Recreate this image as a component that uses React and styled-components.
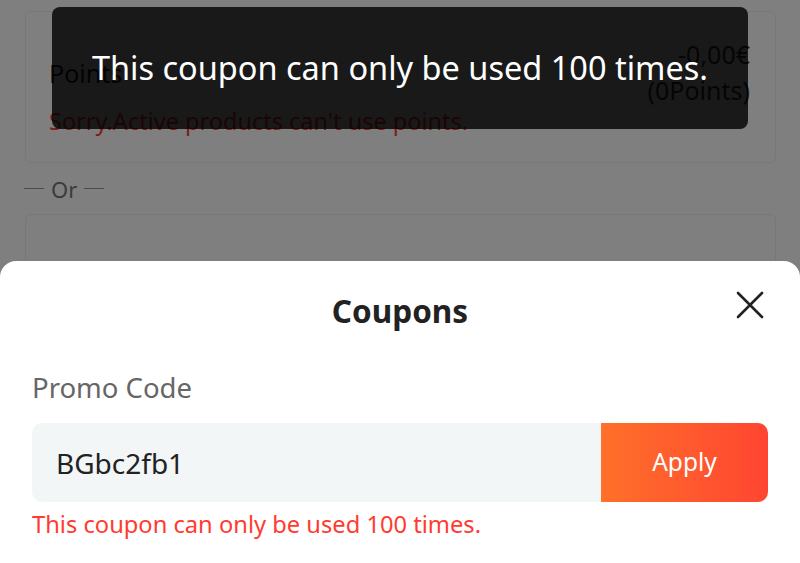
import React from "react";
import styled, { createGlobalStyle } from "styled-components";

const Global = createGlobalStyle`
  html, body { margin: 0; padding: 0; }
  body { font-family: "Noto Sans", "Open Sans", sans-serif; }
  * { box-sizing: border-box; }
`;

const Screen = styled.div`
  position: relative;
  width: 800px;
  height: 563px;
  overflow: hidden;
  background: #ffffff;
`;

const Page = styled.div`
  display: flex;
  flex-direction: column;
  padding: 11px 24px 0 25px;
`;

const Card = styled.div`
  border: 1px solid #f0f0f0;
  border-radius: 6px;
  background: #fefefe;
  padding: ${(p) => p.$pad || "24px 25px 26px 23px"};
  min-height: ${(p) => p.$minH || "auto"};
`;

const PointsRow = styled.div`
  display: flex;
  align-items: center;
  justify-content: space-between;
`;

const PointsLabel = styled.div`
  font-size: 25px;
  color: #222;
  margin-top: 2px;
`;

const Amounts = styled.div`
  display: flex;
  flex-direction: column;
  align-items: flex-end;
  font-size: 25px;
  line-height: 36px;
  color: #333;
`;

const PointsError = styled.div`
  font-size: 23.5px;
  line-height: 30px;
  color: #ff3b30;
  margin-top: -2px;
`;

const OrRow = styled.div`
  display: flex;
  align-items: center;
  height: 51px;
  gap: 7px;
  margin-left: -1px;
  font-size: 22px;
  color: #777;
`;

const OrLine = styled.span`
  width: 20px;
  height: 1px;
  background: #999;
`;

const Overlay = styled.div`
  position: absolute;
  inset: 0;
  background: rgba(0, 0, 0, 0.5);
`;

const Toast = styled.div`
  position: absolute;
  top: 7px;
  left: 52px;
  width: 696px;
  height: 122px;
  border-radius: 8px;
  background: rgba(0, 0, 0, 0.8);
  color: #fff;
  display: flex;
  align-items: center;
  justify-content: center;
  font-size: 32.5px;
  padding-bottom: 2px;
  z-index: 3;
`;

const Sheet = styled.div`
  position: absolute;
  left: 0;
  right: 0;
  bottom: 0;
  height: 302px;
  background: #fff;
  border-radius: 16px 16px 0 0;
  padding: 0 32px;
  display: flex;
  flex-direction: column;
  z-index: 2;
`;

const SheetHeader = styled.div`
  display: grid;
  grid-template-columns: 1fr auto 1fr;
  align-items: center;
  height: 100px;
  margin-top: -1px;
  margin-bottom: 3px;
`;

const Title = styled.div`
  grid-column: 2;
  font-size: 31.5px;
  font-weight: 700;
  color: #222;
`;

const CloseButton = styled.button`
  grid-column: 3;
  justify-self: end;
  margin-right: 4px;
  margin-top: -10px;
  width: 28px;
  height: 28px;
  padding: 0;
  border: 0;
  background: none;
  display: flex;
  align-items: center;
  justify-content: center;
`;

const Label = styled.div`
  font-size: 27.5px;
  line-height: 36px;
  color: #666;
  margin-top: 7px;
`;

const InputRow = styled.div`
  display: flex;
  height: 79px;
  margin-top: 17px;
  border-radius: 10px;
  overflow: hidden;
`;

const CodeField = styled.div`
  flex: 1;
  background: #f3f6f7;
  display: flex;
  align-items: center;
  padding-left: 24px;
  font-size: 28px;
  color: #222;
`;

const ApplyButton = styled.button`
  width: 167px;
  border: 0;
  background: linear-gradient(90deg, #ff7029, #ff4532);
  color: #fff;
  font-family: inherit;
  font-size: 24.5px;
  padding: 0 0 2px;
`;

const ErrorText = styled.div`
  font-size: 23.7px;
  line-height: 30px;
  color: #ff3b30;
  margin-top: 7px;
`;

export default function App() {
  return (
    <Screen>
      <Global />
      <Page>
        <Card>
          <PointsRow>
            <PointsLabel>Points</PointsLabel>
            <Amounts>
              <span>-0,00€</span>
              <span>(0Points)</span>
            </Amounts>
          </PointsRow>
          <PointsError>Sorry.Active products can't use points.</PointsError>
        </Card>
        <OrRow>
          <OrLine />
          <span>Or</span>
          <OrLine />
        </OrRow>
        <Card $minH="120px" />
      </Page>
      <Overlay />
      <Toast>This coupon can only be used 100 times.</Toast>
      <Sheet>
        <SheetHeader>
          <Title>Coupons</Title>
          <CloseButton aria-label="Close">
            <svg width="28" height="28" viewBox="0 0 28 28">
              <path d="M2 2 L26 26 M26 2 L2 26" stroke="#222" strokeWidth="2.6" strokeLinecap="round" fill="none" />
            </svg>
          </CloseButton>
        </SheetHeader>
        <Label>Promo Code</Label>
        <InputRow>
          <CodeField>BGbc2fb1</CodeField>
          <ApplyButton>Apply</ApplyButton>
        </InputRow>
        <ErrorText>This coupon can only be used 100 times.</ErrorText>
      </Sheet>
    </Screen>
  );
}
